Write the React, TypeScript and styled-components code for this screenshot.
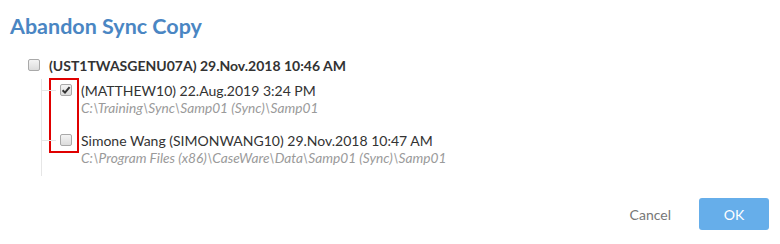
import React from "react";
import styled, { createGlobalStyle } from "styled-components";

const GlobalStyle = createGlobalStyle`
  body {
    margin: 0;
    background: #fff;
    font-family: Lato, "Open Sans", Arial, sans-serif;
  }
`;

type Node = {
  id: string;
  label: string;
  path: string;
  checked: boolean;
};

const children: Node[] = [
  {
    id: "m10",
    label: "(MATTHEW10) 22.Aug.2019 3:24 PM",
    path: "C:\\Training\\Sync\\Samp01 (Sync)\\Samp01",
    checked: true,
  },
  {
    id: "sw10",
    label: "Simone Wang (SIMONWANG10) 29.Nov.2018 10:47 AM",
    path: "C:\\Program Files (x86)\\CaseWare\\Data\\Samp01 (Sync)\\Samp01",
    checked: false,
  },
];

const Box = ({ checked }: { checked: boolean }) => (
  <StBox>
    {checked && (
      <svg width="10" height="10" viewBox="0 0 10 10">
        <path d="M1.6 5.2 L4 7.6 L8.6 2.2" fill="none" stroke="#333" strokeWidth="2" />
      </svg>
    )}
  </StBox>
);

const App = () => {
  return (
    <StDialog>
      <GlobalStyle />
      <StTitle>Abandon Sync Copy</StTitle>
      <StTree>
        <StRootRow>
          <Box checked={false} />
          <StRootLabel>(UST1TWASGENU07A) 29.Nov.2018 10:46 AM</StRootLabel>
        </StRootRow>
        <StChildren>
          <StMark />
          {children.map((node) => (
            <StChild key={node.id}>
              <StRow>
                <Box checked={node.checked} />
                <StLabel>{node.label}</StLabel>
              </StRow>
              <StPath>{node.path}</StPath>
            </StChild>
          ))}
        </StChildren>
      </StTree>
      <StFooter>
        <StCancel>Cancel</StCancel>
        <StOk>OK</StOk>
      </StFooter>
    </StDialog>
  );
};

export default App;

const StDialog = styled.div`
  width: 780px;
  height: 244px;
  box-sizing: border-box;
  padding: 11px 11px 0 10px;
  display: flex;
  flex-direction: column;
`;

const StTitle = styled.h2`
  margin: 0;
  font-size: 21.5px;
  line-height: 30px;
  font-weight: 700;
  color: #4a86c3;
`;

const StTree = styled.div`
  margin-top: 16px;
  padding-left: 18px;
`;

const StRootRow = styled.div`
  display: flex;
  align-items: center;
  gap: 9px;
  height: 16px;
`;

const StBox = styled.span`
  width: 12px;
  height: 12px;
  box-sizing: border-box;
  border: 1px solid #a9a9a9;
  border-radius: 2px;
  background: linear-gradient(#f4f4f4, #dcdcdc);
  display: flex;
  align-items: center;
  justify-content: center;
  flex: none;
`;

const StRootLabel = styled.span`
  font-size: 14px;
  font-weight: 700;
  color: #333;
`;

const StChildren = styled.div`
  position: relative;
  margin-left: 13px;
  margin-top: 6px;
  padding-bottom: 10px;
  border-left: 1px solid #e6e6e6;
`;

const StMark = styled.div`
  position: absolute;
  left: 7px;
  top: -1px;
  width: 30px;
  height: 75px;
  box-sizing: border-box;
  border: 2px solid #e00000;
`;

const StChild = styled.div`
  position: relative;
  padding-left: 18px;
  padding-top: 3px;
  & + & {
    margin-top: 13px;
  }
  &::before {
    content: "";
    position: absolute;
    left: 0;
    top: 11px;
    width: 14px;
    border-top: 1px solid #e6e6e6;
  }
`;

const StRow = styled.div`
  display: flex;
  align-items: center;
  gap: 9px;
  height: 16px;
`;

const StLabel = styled.span`
  font-size: 14px;
  color: #333;
`;

const StPath = styled.div`
  margin-left: 21px;
  margin-top: 1px;
  font-size: 13.7px;
  font-style: italic;
  color: #9a9a9a;
  line-height: 17px;
`;

const StFooter = styled.div`
  margin-top: auto;
  margin-bottom: 14px;
  display: flex;
  justify-content: flex-end;
  align-items: center;
  gap: 28px;
`;

const StCancel = styled.button`
  border: none;
  background: none;
  padding: 0;
  font-family: inherit;
  font-size: 14px;
  color: #777;
`;

const StOk = styled.button`
  width: 70px;
  height: 32px;
  border: none;
  border-radius: 3px;
  background: #66aeea;
  color: #fff;
  font-family: inherit;
  font-size: 14px;
`;
